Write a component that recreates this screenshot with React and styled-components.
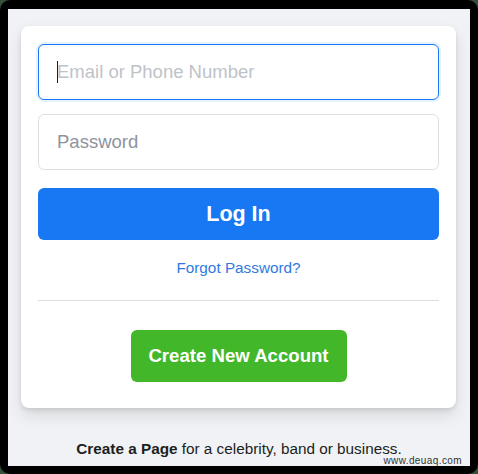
import React from 'react';
import styled, { createGlobalStyle } from 'styled-components';

const GlobalStyle = createGlobalStyle`
  * { box-sizing: border-box; }
  html, body { margin: 0; padding: 0; }
  body {
    background: #34503a;
    font-family: "Liberation Sans", Arial, Helvetica, sans-serif;
  }
`;

const Frame = styled.div`
  width: 478px;
  height: 474px;
  background: #000;
  border-radius: 10px;
  padding: 9px 8px 8px 8px;
`;

const Page = styled.div`
  position: relative;
  height: 100%;
  background: #f0f2f5;
  overflow: hidden;
  padding-top: 17px;
`;

const Card = styled.form`
  width: 435px;
  margin: 0 14px 0 13px;
  background: #fff;
  border-radius: 8px;
  box-shadow: 0 2px 4px rgba(0, 0, 0, 0.1), 0 8px 16px rgba(0, 0, 0, 0.1);
  padding: 18px 17px 26px;
  display: flex;
  flex-direction: column;
`;

const Field = styled.div`
  position: relative;
  margin-bottom: ${p => p.$gap}px;
`;

const Input = styled.input`
  display: block;
  width: 100%;
  height: 56px;
  padding: 0 18px;
  font-family: inherit;
  font-size: 18.5px;
  color: #1c1e21;
  border-radius: 6px;
  border: 1px solid ${p => (p.$focused ? '#1877f2' : '#dddfe2')};
  box-shadow: ${p => (p.$focused ? '0 0 0 2px #e7f3ff' : 'none')};
  outline: none;
  background: #fff;
  &::placeholder {
    color: ${p => (p.$focused ? '#bec3c9' : '#8d949e')};
  }
`;

const Caret = styled.span`
  position: absolute;
  left: 19px;
  top: 17px;
  width: 1px;
  height: 22px;
  background: #1c1e21;
`;

const LoginButton = styled.button`
  height: 52px;
  width: 100%;
  border: none;
  border-radius: 6px;
  background: #1877f2;
  color: #fff;
  font-family: inherit;
  font-size: 21.5px;
  font-weight: 700;
  cursor: pointer;
`;

const Forgot = styled.a`
  display: block;
  margin-top: 18px;
  line-height: 20px;
  text-align: center;
  color: #2f7ae0;
  font-size: 15.3px;
  text-decoration: none;
`;

const Divider = styled.hr`
  margin: 22px 0 0;
  border: none;
  border-top: 1px solid #dadde1;
`;

const CreateButton = styled.button`
  align-self: center;
  margin-top: 29px;
  width: 216px;
  height: 52px;
  border: none;
  border-radius: 6px;
  background: #42b72a;
  color: #fff;
  font-family: inherit;
  font-size: 18.6px;
  font-weight: 700;
  cursor: pointer;
`;

const Footer = styled.p`
  margin: 31px 0 0;
  line-height: 19px;
  text-align: center;
  font-size: 15.3px;
  color: #1c1e21;
  b { font-weight: 700; }
`;

const Watermark = styled.span`
  position: absolute;
  right: 8px;
  bottom: 0;
  font-size: 10px;
  line-height: 11px;
  color: #333;
  letter-spacing: 0.4px;
`;

export default function App() {
  return (
    <>
      <GlobalStyle />
      <Frame>
        <Page>
          <Card onSubmit={e => e.preventDefault()}>
            <Field $gap={14}>
              <Input $focused type="text" placeholder="Email or Phone Number" />
              <Caret />
            </Field>
            <Field $gap={18}>
              <Input type="password" placeholder="Password" />
            </Field>
            <LoginButton type="submit">Log In</LoginButton>
            <Forgot href="#">Forgot Password?</Forgot>
            <Divider />
            <CreateButton type="button">Create New Account</CreateButton>
          </Card>
          <Footer>
            <b>Create a Page</b> for a celebrity, band or business.
          </Footer>
          <Watermark>www.deuaq.com</Watermark>
        </Page>
      </Frame>
    </>
  );
}
